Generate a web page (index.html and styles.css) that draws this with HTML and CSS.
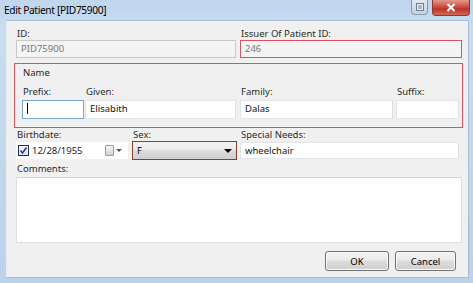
FILE: index.html
```html
<!DOCTYPE html>
<html lang="en">
<head>
    <meta charset="UTF-8">
    <title>Edit Patient</title>
    <link rel="stylesheet" href="styles.css">
</head>
<body>
    <div class="window">
        <div class="titlebar">
            <span class="title">Edit Patient [PID75900]</span>
            <div class="caption-btns">
                <div class="cap-btn help">
                    <svg width="10" height="10" viewBox="0 0 10 10"><rect x="1.5" y="1.5" width="7" height="7" fill="#e8eef5" stroke="#6d7f94"/><path d="M3 4h4M3 6h4" stroke="#6d7f94"/></svg>
                </div>
                <div class="cap-btn close">
                    <svg width="10" height="9" viewBox="0 0 10 9"><path d="M1.5 1 8.5 8M8.5 1 1.5 8" stroke="#fff" stroke-width="2"/></svg>
                </div>
            </div>
        </div>

        <div class="client">
            <div class="row two">
                <div class="field">
                    <label>ID:</label>
                    <div class="input disabled">PID75900</div>
                </div>
                <div class="field">
                    <label>Issuer Of Patient ID:</label>
                    <div class="input disabled invalid">246</div>
                </div>
            </div>

            <div class="group invalid">
                <div class="group-title">Name</div>
                <div class="name-row">
                    <div class="field prefix">
                        <label>Prefix:</label>
                        <div class="input focused"><span class="caret"></span></div>
                    </div>
                    <div class="field given">
                        <label>Given:</label>
                        <div class="input">Elisabith</div>
                    </div>
                    <div class="field family">
                        <label>Family:</label>
                        <div class="input">Dalas</div>
                    </div>
                    <div class="field suffix">
                        <label>Suffix:</label>
                        <div class="input"></div>
                    </div>
                </div>
            </div>

            <div class="row three">
                <div class="field birth">
                    <label>Birthdate:</label>
                    <div class="date">
                        <span class="check">
                            <svg width="9" height="9" viewBox="0 0 9 9"><path d="M1.5 4.5 3.5 7 7.5 1.5" fill="none" stroke="#1b3f9a" stroke-width="1.6"/></svg>
                        </span>
                        <span class="date-text">12/28/1955</span>
                        <span class="cal"></span>
                        <span class="arrow small"></span>
                    </div>
                </div>
                <div class="field sex">
                    <label>Sex:</label>
                    <div class="combo">
                        <span>F</span>
                        <span class="arrow"></span>
                    </div>
                </div>
                <div class="field needs">
                    <label>Special Needs:</label>
                    <div class="input">wheelchair</div>
                </div>
            </div>

            <div class="field comments">
                <label>Comments:</label>
                <div class="textarea"></div>
            </div>

            <div class="buttons">
                <button class="btn ok">OK</button>
                <button class="btn cancel">Cancel</button>
            </div>
        </div>
    </div>
</body>
</html>
```

FILE: styles.css
```css
* {
    margin: 0;
    padding: 0;
    box-sizing: border-box;
}

body {
    font-family: 'Noto Sans', 'Open Sans', sans-serif;
    font-size: 9.5px;
    color: #1e1e1e;
    background: #c4d8ee;
}

.window {
    width: 473px;
    height: 283px;
    background: linear-gradient(to bottom, #c0d6ed, #c9dcf0 30px, #bcd2ea);
    padding: 0 4px 5px 6px;
    display: flex;
    flex-direction: column;
}

.titlebar {
    height: 20px;
    display: flex;
    align-items: flex-start;
    justify-content: space-between;
}

.title {
    font-size: 10.2px;
    letter-spacing: -0.35px;
    color: #000;
    padding: 3px 0 0 0;
    margin-left: -2px;
    line-height: 14px;
}

.caption-btns {
    display: flex;
    gap: 4px;
    margin-right: -1px;
}

.cap-btn {
    height: 16px;
    border: 1px solid #8a9bb1;
    border-top: none;
    border-radius: 0 0 4px 4px;
    display: flex;
    align-items: center;
    justify-content: center;
}

.cap-btn.help {
    width: 17px;
    height: 15px;
    background: linear-gradient(to bottom, #dfe8f3, #c3d1e2);
}

.cap-btn.close {
    width: 38px;
    border-color: #8a3a30;
    background: linear-gradient(to bottom, #e29b8c, #c9463a 50%, #b9352a 60%, #d46a55);
}

.client {
    flex: 1;
    background: #f0f0f0;
    border: 1px solid #a9bcd3;
    border-left-color: #e8eef6;
    padding: 7px 6px 0 9px;
    display: flex;
    flex-direction: column;
}

label {
    display: block;
    line-height: 12px;
    height: 12px;
    padding-left: 1px;
    white-space: nowrap;
    color: #2a2a2a;
}

.row.two {
    display: grid;
    grid-template-columns: 220px 222px;
    gap: 4px;
}

.input {
    height: 18px;
    background: #fff;
    border: 1px solid #abadb3;
    border-top-color: #e3e3e3;
    border-left-color: #e2e3ea;
    border-right-color: #dbdfe6;
    border-bottom-color: #e3e9ef;
    padding: 0 4px;
    line-height: 16px;
    white-space: nowrap;
    overflow: hidden;
    color: #111;
}

.input.disabled {
    background: #f4f4f4;
    color: #777;
    border-color: #c9c9c9;
}

.input.invalid,
.group.invalid {
    border: 1px solid #e1505d;
}

.input.focused {
    border-color: #7aa6d4;
}

.caret {
    display: inline-block;
    width: 1px;
    height: 11px;
    background: #000;
    vertical-align: middle;
    margin-top: -2px;
}

.group {
    margin: 5px -1px 0 -2px;
    height: 65px;
    padding: 2px 2px 0 7px;
}

.group-title {
    line-height: 14px;
    padding-left: 1px;
    margin-bottom: 6px;
}

.name-row {
    display: flex;
}

.name-row .field.prefix { width: 62px; }
.name-row .field.given { width: 151px; margin-left: 1px; }
.name-row .field.family { width: 153px; margin-left: 4px; }
.name-row .field.suffix { width: 63px; margin-left: 3px; }

.name-row .input {
    height: 19px;
    margin-top: 2px;
}

.row.three {
    display: flex;
}

.row.three label {
    height: 14px;
    line-height: 13px;
}

.field.birth { width: 112px; }
.field.sex { width: 105px; margin-left: 4px; }
.field.needs { width: 219px; margin-left: 3px; }

.date {
    height: 17px;
    background: #fff;
    display: flex;
    align-items: center;
    padding-left: 2px;
}

.check {
    width: 11px;
    height: 11px;
    border: 1px solid #1c2b5a;
    background: linear-gradient(to bottom, #f4f6fb, #dfe5f3);
    display: flex;
    align-items: center;
    justify-content: center;
}

.date-text {
    margin-left: 3px;
    flex: 1;
}

.cal {
    width: 9px;
    height: 11px;
    border: 1px solid #9a9a9a;
    border-radius: 1px;
    background: linear-gradient(to bottom, #f6f6f6, #d2d2d2);
}

.arrow {
    width: 0;
    height: 0;
    border-left: 4px solid transparent;
    border-right: 4px solid transparent;
    border-top: 4px solid #000;
}

.arrow.small {
    border-left-width: 3px;
    border-right-width: 3px;
    border-top: 3px solid #555;
    margin: 0 6px 0 2px;
}

.combo {
    height: 19px;
    margin-top: -1px;
    border: 1px solid #8c3e2e;
    background: linear-gradient(to bottom, #f2f2f2, #ebebeb 45%, #dcdcdc 50%, #cfcfcf);
    display: flex;
    align-items: center;
    justify-content: space-between;
    padding: 0 4px 0 4px;
    color: #000;
}

.field.needs .input {
    height: 17px;
    line-height: 15px;
}

.field.comments {
    margin-top: 2px;
}

.field.comments label {
    height: 14px;
    line-height: 14px;
}

.textarea {
    height: 66px;
    margin-top: 1px;
    background: #fff;
    border: 1px solid #dcdfe4;
    border-top-color: #cfd3d8;
}

.buttons {
    display: flex;
    justify-content: flex-end;
    gap: 6px;
    margin-top: 8px;
    padding-right: 6px;
}

.btn {
    font-family: 'Noto Sans', 'Open Sans', sans-serif;
    font-size: 9.5px;
    height: 20px;
    border: 1px solid #707070;
    border-radius: 3px;
    background: linear-gradient(to bottom, #f2f2f2, #ebebeb 45%, #dddddd 50%, #cfcfcf);
    color: #000;
    box-shadow: inset 0 0 0 1px #fbfbfb;
}

.btn.ok { width: 64px; }
.btn.cancel { width: 61px; }
```
